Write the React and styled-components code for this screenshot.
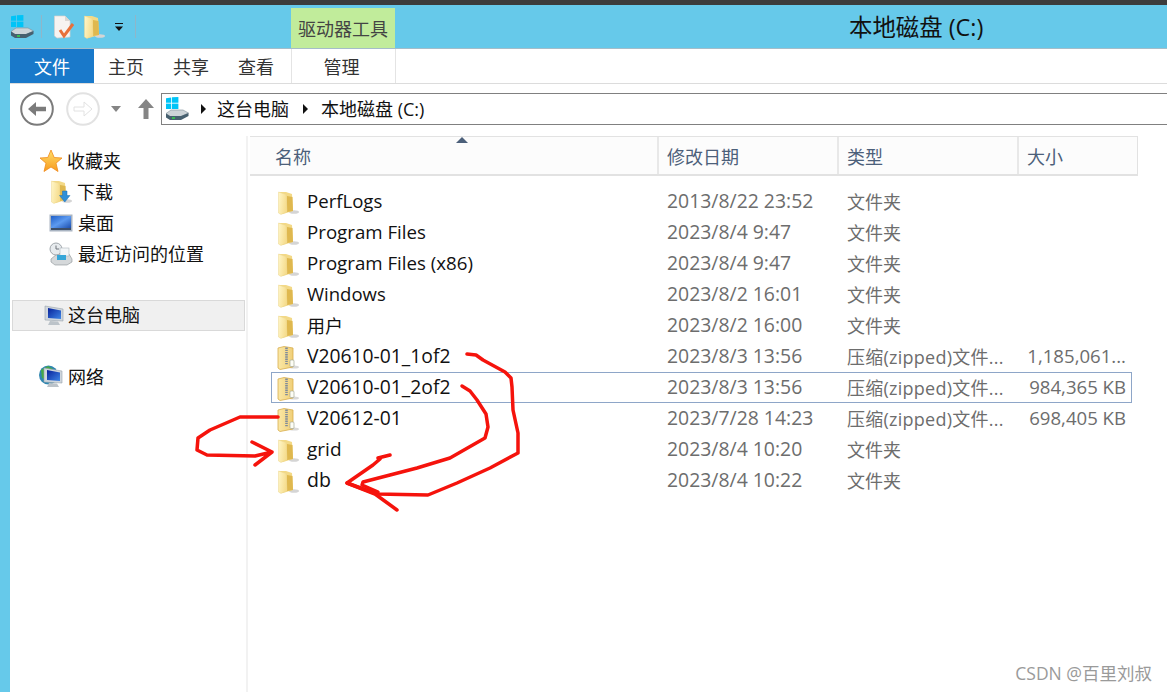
import React, { useId } from 'react'
import styled, { createGlobalStyle } from 'styled-components'

const GlobalStyle = createGlobalStyle`
    html, body {
        margin: 0;
        padding: 0;
        background: #66c9ea;
    }
    body {
        font-family: "Open Sans", "Noto Sans CJK SC", sans-serif;
        font-size: 18px;
    }
`;

const Page = styled.div`
    position: relative;
    width: 1167px;
    height: 692px;
    overflow: hidden;
    background: #66c9ea;
    border-top: 5px solid #3c3c3c;
    box-sizing: border-box;
`;

const TitleBar = styled.div`
    display: flex;
    height: 43px;
    align-items: flex-end;
`;

const QuickAccess = styled.div`
    display: flex;
    align-items: center;
    width: 291px;
    height: 43px;
    padding-left: 10px;
    box-sizing: border-box;
`;

const QuickSep = styled.span`
    width: 1px;
    height: 23px;
    background: #8fb6c9;
    margin: ${props => props.$margin};
`;

const Gap = styled.span`
    flex: none;
    width: ${props => props.$w}px;
`;

const ToolTab = styled.div`
    width: 104px;
    height: 40px;
    background: #c1ec9b;
    color: #444;
    font-size: 18px;
    display: flex;
    align-items: center;
    justify-content: center;
    box-sizing: border-box;
    padding-bottom: 1px;
`;

const WindowTitle = styled.div`
    flex: 1;
    color: #111;
    font-size: 23.4px;
    height: 43px;
    line-height: 45px;
    padding-left: 454px;
    white-space: nowrap;
`;

const RibbonTabs = styled.div`
    display: flex;
    height: 36px;
    margin-left: 10px;
    background: #fff;
    border-top: 1px solid #a5bdc9;
    border-bottom: 1px solid #dcdcdc;
    box-sizing: border-box;
`;

const FileTab = styled.div`
    width: 84px;
    background: #1979ca;
    color: #fff;
    font-size: 18px;
    display: flex;
    align-items: center;
    justify-content: center;
`;

const RibbonTab = styled.div`
    width: ${props => props.$width}px;
    margin-left: ${props => props.$left || 0}px;
    color: #333;
    font-size: 18px;
    display: flex;
    align-items: center;
    justify-content: center;
    padding: 0 ${props => props.$tool ? '4px' : '0'} 1px 0;
    box-sizing: border-box;
    border-left: ${props => props.$tool ? '1px solid #e4e4e4' : 'none'};
    border-right: ${props => props.$tool ? '1px solid #e4e4e4' : 'none'};
`;

const Body = styled.div`
    margin-left: 10px;
    background: #fff;
    height: 608px;
    display: flex;
    flex-direction: column;
`;

const NavRow = styled.div`
    display: flex;
    align-items: center;
    height: 52px;
    padding: 0 0 2px 10px;
    box-sizing: border-box;
`;

const AddressBar = styled.div`
    flex: 1;
    display: flex;
    align-items: center;
    height: 32px;
    margin-left: 7px;
    border: 1px solid #808080;
    border-right: none;
    box-sizing: border-box;
    color: #111;
    font-size: 18px;
    padding-left: 3px;
`;

const Crumb = styled.span`
    margin-left: ${props => props.$left}px;
    padding-bottom: 2px;
    white-space: nowrap;
`;

const Caret = styled.span`
    width: 0;
    height: 0;
    margin-left: ${props => props.$left}px;
    border-top: 5.5px solid transparent;
    border-bottom: 5.5px solid transparent;
    border-left: 5.5px solid #111;
`;

const Content = styled.div`
    flex: 1;
    display: flex;
`;

const Sidebar = styled.div`
    width: 238px;
    box-sizing: border-box;
    padding: 10px 0 0 2px;
    border-right: 2px solid #f2f2f2;
`;

const NavGroup = styled.div`
    margin-bottom: ${props => props.$after}px;
`;

const NavItem = styled.div`
    display: flex;
    align-items: center;
    height: 31px;
    padding: 0 0 2px ${props => props.$pad}px;
    box-sizing: border-box;
    color: #111;
    font-size: 18px;
    background: ${props => props.$active ? '#f0f0f0' : 'transparent'};
    border: 1px solid ${props => props.$active ? '#d9d9d9' : 'transparent'};
    margin-right: 1px;
`;

const NavLabel = styled.span`
    padding-bottom: 2px;
    white-space: nowrap;
`;

const NavIcon = styled.span`
    display: flex;
    width: ${props => props.$width}px;
    flex: none;
    align-items: center;
    justify-content: center;
    margin-right: ${props => props.$gap}px;
`;

const FileList = styled.div`
    flex: 1;
    padding-left: 2px;
`;

const Header = styled.div`
    position: relative;
    display: grid;
    grid-template-columns: 409px 180px 180px 118px;
    width: 888px;
    height: 40px;
    background: #fcfcfc;
    border-top: 1px solid #e2e2e2;
    border-bottom: 2px solid #e2e2e2;
    border-right: 1px solid #e2e2e2;
    box-sizing: border-box;
`;

const HeaderCell = styled.div`
    display: flex;
    align-items: center;
    padding-left: ${props => props.$pad}px;
    color: #4c607a;
    font-size: 18px;
    border-right: ${props => props.$last ? 'none' : '2px solid #e8e8e8'};
    box-sizing: border-box;
`;

const SortArrow = styled.span`
    position: absolute;
    left: 206px;
    top: 0;
    width: 0;
    height: 0;
    border-left: 6px solid transparent;
    border-right: 6px solid transparent;
    border-bottom: 6px solid #4c607a;
`;

const Rows = styled.div`
    padding-top: 10px;
`;

const Row = styled.div`
    display: grid;
    grid-template-columns: 395px 180px 180px 99px;
    align-items: center;
    height: 31px;
    width: 861px;
    margin-left: 21px;
    padding-bottom: 2px;
    box-sizing: border-box;
    border: 1px solid ${props => props.$focus ? '#8ea6c8' : 'transparent'};
`;

const NameCell = styled.div`
    display: flex;
    align-items: center;
    padding-left: 5px;
    color: #111;
    font-size: ${props => props.$size}px;
    white-space: nowrap;
`;

const NameIcon = styled.span`
    display: flex;
    width: 24px;
    flex: none;
    margin-right: 6px;
    margin-top: 2px;
`;

const NameText = styled.span`
    padding-bottom: 2px;
`;

const DateCell = styled.div`
    color: #6d6d6d;
    font-size: 19.4px;
    padding-bottom: 2px;
    white-space: nowrap;
`;

const TypeCell = styled.div`
    color: #6d6d6d;
    font-size: 18px;
    padding-bottom: 2px;
    white-space: nowrap;
    letter-spacing: ${props => props.$zip ? '0.25px' : '0'};
`;

const SizeCell = styled.div`
    color: #6d6d6d;
    font-size: 18.6px;
    padding-bottom: 2px;
    white-space: nowrap;
    text-align: right;
`;

const Scribbles = styled.svg`
    position: absolute;
    left: 0;
    top: -5px;
    pointer-events: none;
`;

const Watermark = styled.div`
    position: absolute;
    right: 15px;
    bottom: 7px;
    color: #9a9a9a;
    font-size: 17.5px;
    white-space: nowrap;
`;

const files = [
    { name: 'PerfLogs', date: '2013/8/22 23:52', type: '文件夹', size: '', nameSize: 18.6 },
    { name: 'Program Files', date: '2023/8/4 9:47', type: '文件夹', size: '', nameSize: 18.7 },
    { name: 'Program Files (x86)', date: '2023/8/4 9:47', type: '文件夹', size: '', nameSize: 18.7 },
    { name: 'Windows', date: '2023/8/2 16:01', type: '文件夹', size: '', nameSize: 18.5 },
    { name: '用户', date: '2023/8/2 16:00', type: '文件夹', size: '', nameSize: 18 },
    { name: 'V20610-01_1of2', date: '2023/8/3 13:56', type: '压缩(zipped)文件...', size: '1,185,061...', zip: true, nameSize: 19.3 },
    { name: 'V20610-01_2of2', date: '2023/8/3 13:56', type: '压缩(zipped)文件...', size: '984,365 KB', zip: true, focus: true, nameSize: 19.3 },
    { name: 'V20612-01', date: '2023/7/28 14:23', type: '压缩(zipped)文件...', size: '698,405 KB', zip: true, nameSize: 19.3 },
    { name: 'grid', date: '2023/8/4 10:20', type: '文件夹', size: '', nameSize: 19 },
    { name: 'db', date: '2023/8/4 10:22', type: '文件夹', size: '', nameSize: 19.5 },
];

const FolderIcon = ({ arrow }) => {
    const id = useId();
    return (
        <svg width="24" height="24" viewBox="0 0 24 24">
            <defs>
                <linearGradient id={id} x1="0" x2="1" y1="0" y2="0.3">
                    <stop offset="0" stopColor="#fff6c8" />
                    <stop offset="1" stopColor="#f6dd8e" />
                </linearGradient>
            </defs>
            <ellipse cx="17" cy="21" rx="5" ry="1.8" fill="#d5d5d5" />
            <path d="M2 1 L9 1 L15 3 L16 20 L6 23 L2 22 Z" fill="#f3d987" />
            <path d="M10 5 L15.5 6 L16 20 L10 21 Z" fill="#dfb84f" />
            <path d="M1.5 1 L9 3.5 L10 20.5 L4 23.5 L1.5 22 Z" fill={`url(#${id})`} stroke="#ecd68e" strokeWidth="0.5" />
            {arrow && <path d="M12.5 11 H17 V15.5 H20 L14.8 22 L9.5 15.5 H12.5 Z" fill="#2f8fd8" stroke="#1a6fb5" strokeWidth="0.5" />}
        </svg>
    );
};

const ZipIcon = () => {
    const id = useId();
    return (
        <svg width="24" height="24" viewBox="0 0 24 24">
            <defs>
                <linearGradient id={id} x1="0" x2="1" y1="0" y2="0">
                    <stop offset="0" stopColor="#fbe8a6" />
                    <stop offset="1" stopColor="#f0cf78" />
                </linearGradient>
            </defs>
            <ellipse cx="17" cy="21" rx="5" ry="1.6" fill="#d8d8d8" />
            <path d="M1 2 L7 0.5 L16 2 L16 21 L3 23.5 L1 22 Z" fill={`url(#${id})`} stroke="#d8ad4c" strokeWidth="0.8" />
            <path d="M9.5 1.5 V19" stroke="#7f8b9a" strokeWidth="2.6" strokeDasharray="1.4 0.8" />
            <rect x="13" y="14" width="4" height="6.5" rx="1" fill="#fdfdf5" stroke="#a5a99a" strokeWidth="0.7" />
        </svg>
    );
};

const DriveIcon = () => (
    <svg width="24" height="24" viewBox="0 0 24 24">
        <g fill="#00c4f7">
            <path d="M1 1.2 L6.2 0.4 V5.8 H1 Z" />
            <path d="M7 0.3 L13.4 0 V5.8 H7 Z" />
            <path d="M1 6.6 H6.2 V12 H1 Z" />
            <path d="M7 6.6 H13.4 V12 H7 Z" />
        </g>
        <path d="M1 16.5 L6 13 H18 L23.5 16 L16 19.5 H5 Z" fill="#cdd4d8" stroke="#7e8e98" strokeWidth="0.6" />
        <path d="M1 16.5 L5 19 H16 L23.5 16 V19 L16 23 H5 L1 20.5 Z" fill="#47606f" />
        <path d="M7 21 H10" stroke="#35d04a" strokeWidth="1.6" />
    </svg>
);

const NoteIcon = () => (
    <svg width="20" height="24" viewBox="0 0 20 24">
        <path d="M0.5 1 H11 L16 6 V22 L3 23 L0.5 21 Z" fill="#f7f3f1" stroke="#d8d0cc" strokeWidth="0.7" />
        <path d="M11 1 L11 6 L16 6 Z" fill="#dcd6d2" />
        <path d="M6 15 L10 21 L19 9" fill="none" stroke="#e8703a" strokeWidth="3" />
    </svg>
);

const StarIcon = () => {
    const id = useId();
    return (
        <svg width="24" height="24" viewBox="0 0 24 24">
            <defs>
                <linearGradient id={id} x1="0" x2="0" y1="0" y2="1">
                    <stop offset="0" stopColor="#ffdf6a" />
                    <stop offset="1" stopColor="#f79a1e" />
                </linearGradient>
            </defs>
            <path d="M12 1 L15.2 8.5 L23 9 L17 14.2 L19 22.5 L12 18 L5 22.5 L7 14.2 L1 9 L8.8 8.5 Z" fill={`url(#${id})`} stroke="#f08a1a" strokeWidth="0.8" />
        </svg>
    );
};

const DesktopIcon = () => {
    const id = useId();
    return (
        <svg width="24" height="20" viewBox="0 0 24 20">
            <defs>
                <linearGradient id={id} x1="0" x2="1" y1="0" y2="1">
                    <stop offset="0" stopColor="#1f5fc8" />
                    <stop offset="0.5" stopColor="#5c9af0" />
                    <stop offset="1" stopColor="#1d4fae" />
                </linearGradient>
            </defs>
            <rect x="0.5" y="1.5" width="23" height="17" fill="#a9b4c2" />
            <rect x="2" y="3" width="20" height="12" fill={`url(#${id})`} />
            <rect x="2" y="15" width="20" height="2" fill="#3d4f68" />
        </svg>
    );
};

const RecentIcon = () => (
    <svg width="24" height="24" viewBox="0 0 24 24">
        <path d="M2 17 L8 12 H20 L23 17 V20 L18 23 H6 L2 20 Z" fill="#d5d8da" stroke="#8c9296" strokeWidth="0.6" />
        <circle cx="7" cy="7" r="6" fill="#e7ebee" stroke="#a0a6ab" />
        <path d="M7 3.5 V7 H10" fill="none" stroke="#6d7378" />
        <rect x="11" y="6" width="9" height="8" fill="#f3f6f8" stroke="#b0b7bc" strokeWidth="0.6" />
        <rect x="8" y="13" width="9" height="5" fill="#36a6d8" />
    </svg>
);

const MonitorIcon = ({ globe }) => {
    const id = useId();
    return (
        <svg width="24" height="24" viewBox="0 0 24 24">
            <defs>
                <linearGradient id={id} x1="0" x2="1" y1="0" y2="1">
                    <stop offset="0" stopColor="#08219a" />
                    <stop offset="1" stopColor="#3f86e6" />
                </linearGradient>
            </defs>
            {globe && <circle cx="9.5" cy="10" r="9.5" fill="#2f86b0" />}
            {globe && <path d="M2 5 L9 1 L14 4 L8 9 L9 15 L3 13 Z" fill="#46a846" />}
            <path d="M5 3 L23 6 V18 L5 17 Z" fill="#cfd6dd" stroke="#98a2ab" strokeWidth="0.6" />
            <path d="M8 5 L21 7.5 V16 L8 15 Z" fill={`url(#${id})`} />
            <path d="M10 18 L18 18.5 L20 22 L8 22 Z" fill="#bcc3c9" />
        </svg>
    );
};

const BackIcon = ({ dim }) => (
    <svg width="34" height="34" viewBox="0 0 34 34">
        <circle cx="17" cy="17" r="15.8" fill="none" stroke={dim ? '#e2e2e2' : '#7b7b7b'} strokeWidth="2" />
        {dim
            ? <path d="M8 15 H18 V10 L26 17 L18 24 V19 H8 Z" fill="none" stroke="#e2e2e2" strokeWidth="1" />
            : <path d="M8 17 L16 10 V14.8 H26 V19.2 H16 V24 Z" fill="#7b7b7b" />}
    </svg>
);

const UpArrow = () => (
    <svg width="16" height="20" viewBox="0 0 16 20">
        <path d="M8 0 L16 9 H10.5 V20 H5.5 V9 H0 Z" fill="#858585" />
    </svg>
);

const HistoryCaret = () => (
    <svg width="10" height="6" viewBox="0 0 10 6">
        <path d="M0 0 H10 L5 6 Z" fill="#858585" />
    </svg>
);

const QuickCaret = () => (
    <svg width="10" height="10" viewBox="0 0 10 10">
        <path d="M1 1.5 H9" stroke="#111" strokeWidth="1" />
        <path d="M1 4.5 H9 L5 9 Z" fill="#111" />
    </svg>
);

const App = () => {
    return (
        <Page>
            <GlobalStyle />
            <TitleBar>
                <QuickAccess>
                    <DriveIcon />
                    <QuickSep $margin="0 12px 0 7px" />
                    <NoteIcon />
                    <Gap $w={9} />
                    <FolderIcon />
                    <Gap $w={7} />
                    <QuickCaret />
                    <Gap $w={11} />
                    <QuickSep $margin="0" />
                </QuickAccess>
                <ToolTab>驱动器工具</ToolTab>
                <WindowTitle>本地磁盘 (C:)</WindowTitle>
            </TitleBar>
            <RibbonTabs>
                <FileTab>文件</FileTab>
                <RibbonTab $width={36} $left={14}>主页</RibbonTab>
                <RibbonTab $width={36} $left={29}>共享</RibbonTab>
                <RibbonTab $width={36} $left={29}>查看</RibbonTab>
                <RibbonTab $width={105} $left={17} $tool>管理</RibbonTab>
            </RibbonTabs>
            <Body>
                <NavRow>
                    <BackIcon />
                    <Gap $w={12} />
                    <BackIcon dim />
                    <Gap $w={11} />
                    <HistoryCaret />
                    <Gap $w={17} />
                    <UpArrow />
                    <AddressBar>
                        <DriveIcon />
                        <Caret $left={12} />
                        <Crumb $left={11}>这台电脑</Crumb>
                        <Caret $left={14} />
                        <Crumb $left={13}>本地磁盘 (C:)</Crumb>
                    </AddressBar>
                </NavRow>
                <Content>
                    <Sidebar>
                        <NavGroup $after={30}>
                            <NavItem $pad={26}><NavIcon $width={24} $gap={4}><StarIcon /></NavIcon><NavLabel>收藏夹</NavLabel></NavItem>
                            <NavItem $pad={37}><NavIcon $width={24} $gap={3}><FolderIcon arrow /></NavIcon><NavLabel>下载</NavLabel></NavItem>
                            <NavItem $pad={36}><NavIcon $width={24} $gap={5}><DesktopIcon /></NavIcon><NavLabel>桌面</NavLabel></NavItem>
                            <NavItem $pad={36}><NavIcon $width={24} $gap={5}><RecentIcon /></NavIcon><NavLabel>最近访问的位置</NavLabel></NavItem>
                        </NavGroup>
                        <NavGroup $after={31}>
                            <NavItem $active $pad={27}><NavIcon $width={24} $gap={4}><MonitorIcon /></NavIcon><NavLabel>这台电脑</NavLabel></NavItem>
                        </NavGroup>
                        <NavItem $pad={26}><NavIcon $width={24} $gap={5}><MonitorIcon globe /></NavIcon><NavLabel>网络</NavLabel></NavItem>
                    </Sidebar>
                    <FileList>
                        <Header>
                            <SortArrow />
                            <HeaderCell $pad={25}>名称</HeaderCell>
                            <HeaderCell $pad={8}>修改日期</HeaderCell>
                            <HeaderCell $pad={8}>类型</HeaderCell>
                            <HeaderCell $pad={8} $last>大小</HeaderCell>
                        </Header>
                        <Rows>
                            {files.map(file => (
                                <Row key={file.name} $focus={file.focus}>
                                    <NameCell $size={file.nameSize}>
                                        <NameIcon>{file.zip ? <ZipIcon /> : <FolderIcon />}</NameIcon>
                                        <NameText>{file.name}</NameText>
                                    </NameCell>
                                    <DateCell>{file.date}</DateCell>
                                    <TypeCell $zip={file.zip}>{file.type}</TypeCell>
                                    <SizeCell>{file.size}</SizeCell>
                                </Row>
                            ))}
                        </Rows>
                    </FileList>
                </Content>
            </Body>
            <Scribbles width="1167" height="692" viewBox="0 0 1167 692" fill="none" stroke="#f5130c" strokeWidth="3.5" strokeLinecap="round" strokeLinejoin="round">
                <path d="M467 354 L476 355 L483 360 L505 372 L511 378 L512 387 L513 410 L518 433 L518 453 L490 468 L457 483 L428 495 L377 494 L347 483" />
                <path d="M462 386 L470 391 L477 400 L486 414 L488 427 L485 438 L450 458 L417 468 L390 475 L363 482 L362 485 L378 492" />
                <path d="M347 483 L373 465 L380 459 M378 458 L390 455 M347 483 L375 494 L397 510" />
                <path d="M278 417 L240 417 L210 430 L198 438 L197 450 L207 455 L255 456 L272 452 M252 442 L272 452 L255 465" />
            </Scribbles>
            <Watermark>CSDN @百里刘叔</Watermark>
        </Page>
    );
};

export default App
